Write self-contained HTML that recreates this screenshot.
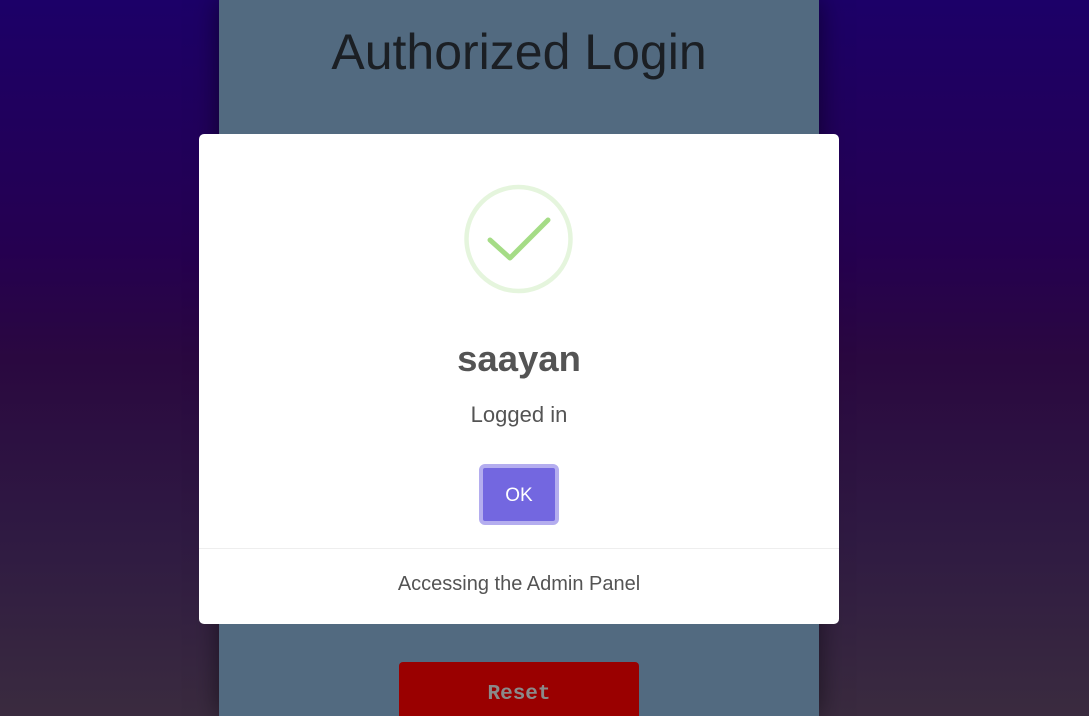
<!DOCTYPE html>
<html><head><style>
html,body{margin:0;padding:0;width:1089px;height:716px;overflow:hidden;font-family:"Liberation Sans",sans-serif}
body{background:linear-gradient(#1c0068 0%,#250050 35%,#2a0840 50%,#2f1a42 75%,#3a2b3f 100%);position:relative}
.panel{position:absolute;left:219px;top:0;width:600px;height:716px;background:#526a80;box-shadow:0 0 25px rgba(0,0,0,.5)}
.title{position:absolute;left:219px;width:600px;top:23px;text-align:center;font-size:50px;color:#1b1f24}
.reset{position:absolute;left:399px;top:662px;width:240px;height:60px;background:#9a0000;border-radius:4px;color:#8a8a8a;font-family:"Liberation Mono",monospace;font-weight:bold;font-size:21px;text-align:center;line-height:66px}
.modal{position:absolute;left:199px;top:134px;width:640px;height:490px;background:#fff;border-radius:5px}
.t{position:absolute;width:640px;text-align:center;color:#545454}
.ok{position:absolute;left:280px;top:330px;width:80px;height:61px;box-sizing:border-box;border:4px solid #b4adef;border-radius:6px;background:#7367e0;color:#fff;font-size:19px;line-height:55px;text-align:center}
.sep{position:absolute;left:0;top:414px;width:640px;height:1px;background:#eee}
</style></head><body>
<div class="panel"></div>
<div class="title">Authorized Login</div>
<div class="reset">Reset</div>
<div class="modal">
<svg style="position:absolute;left:0;top:0" width="640" height="200">
<circle cx="319.5" cy="105" r="52" fill="none" stroke="#e5f5dd" stroke-width="4.5"/>
<path d="M291 106 L311 124 L349 86" fill="none" stroke="#a5dc86" stroke-width="5" stroke-linecap="round" stroke-linejoin="round"/>
</svg>
<div class="t" style="top:204px;font-size:36.5px;font-weight:bold">saayan</div>
<div class="t" style="top:268px;font-size:22px">Logged in</div>
<div class="ok">OK</div>
<div class="sep"></div>
<div class="t" style="top:439px;font-size:20px">Accessing the Admin Panel</div>
</div>
</body></html>
